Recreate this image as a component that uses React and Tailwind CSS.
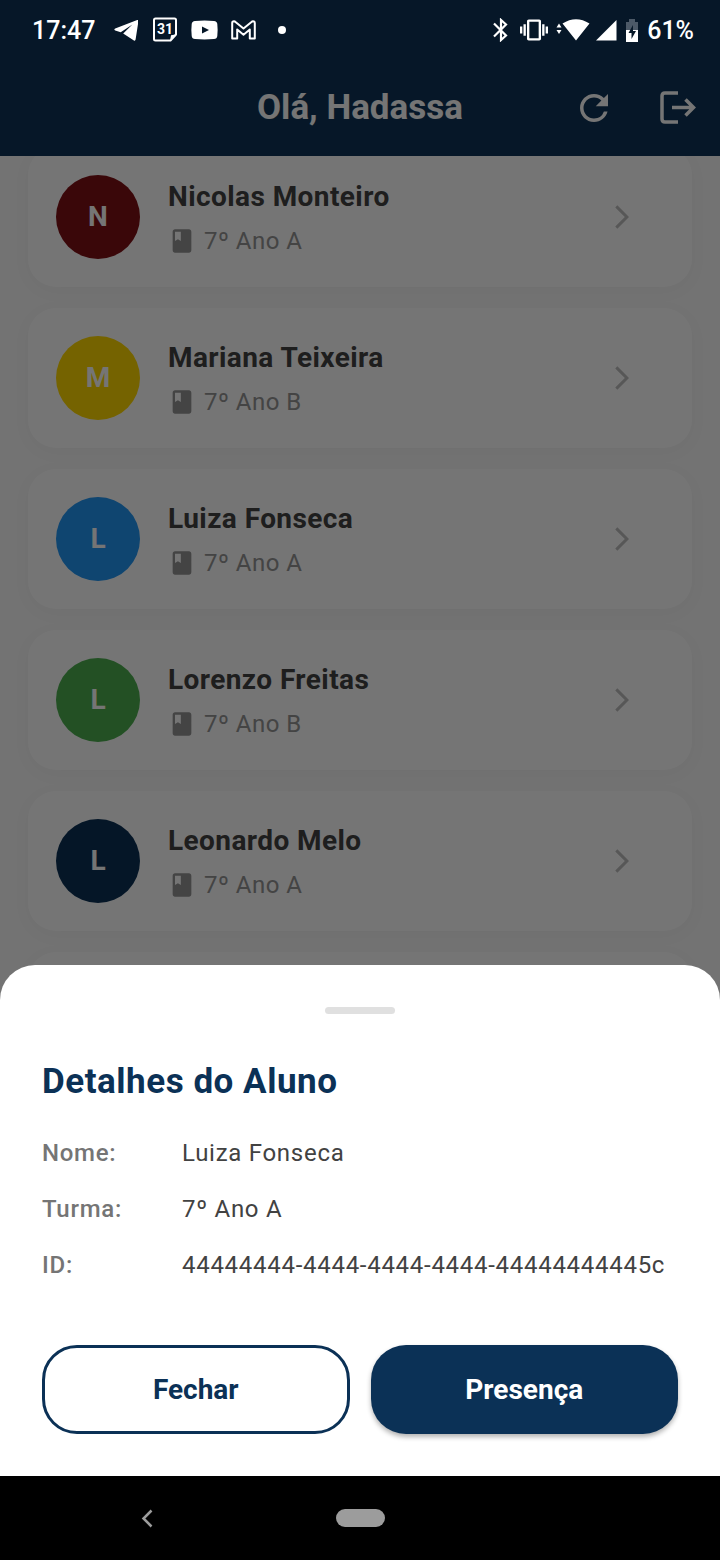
import { MdClass, MdRefresh, MdArrowForwardIos, MdVibration } from "react-icons/md";

const students = [
  { name: "Nicolas Monteiro", group: "7º Ano A", color: "bg-[#7f1015]" },
  { name: "Mariana Teixeira", group: "7º Ano B", color: "bg-[#ffd700]" },
  { name: "Luiza Fonseca", group: "7º Ano A", color: "bg-[#2196f3]" },
  { name: "Lorenzo Freitas", group: "7º Ano B", color: "bg-[#4caf50]" },
  { name: "Leonardo Melo", group: "7º Ano A", color: "bg-[#0b3156]" },
];

const details = [
  ["Nome:", "Luiza Fonseca"],
  ["Turma:", "7º Ano A"],
  ["ID:", "44444444-4444-4444-4444-44444444445c"],
];

function StatusBar() {
  return (
    <div className="relative z-10 flex h-[60px] items-center justify-between pl-8 pr-[26px] text-white">
      <div className="flex items-center">
        <span className="w-[82px] text-[25px] leading-none font-medium">17:47</span>
        <svg className="mr-[15px] h-6 w-6" viewBox="0 0 24 24" fill="currentColor" aria-hidden="true">
          <path d="M23.2 2.1 1.2 10.6c-1.2.5-1.1 1.5 0 1.8l5.5 1.8L18.4 6.6 9.2 15.4l10.7 7c.8.5 1.5.2 1.7-.8L24.4 3.4c.2-1.1-.3-1.6-1.2-1.3z" />
        </svg>
        <svg className="mr-[14px] h-[26px] w-6" viewBox="0 0 24 26" aria-hidden="true">
          <path d="M2.500 1.500h19q1.500 0 1.500 1.500v14.500L17.500 23.500h-15Q1 23.500 1 22V3q0-1.500 1.500-1.500z" fill="none" stroke="currentColor" strokeWidth="2" strokeLinejoin="round" />
          <path d="M22.500 17.500 18 18.200 17.200 23z" fill="currentColor" />
          <text x="12" y="17" textAnchor="middle" fontSize="14" fontWeight="700" fill="currentColor">31</text>
        </svg>
        <svg className="mr-[13px] h-5 w-[27px]" viewBox="0 0 27 20" aria-hidden="true">
          <path fillRule="evenodd" d="M4 .9Q13.500 0 23 .9Q26 1.200 26.300 4Q27 10 26.300 16Q26 18.800 23 19.100Q13.500 20 4 19.100Q1 18.800.7 16Q0 10 .7 4Q1 1.200 4 .9zM11 6.500v7l7-3.500z" fill="currentColor" />
        </svg>
        <svg className="mr-[22px] h-5 w-[25px]" viewBox="0 0 25 20" aria-hidden="true">
          <path d="M1.200 18.500V3Q1.200 1.200 3 1.200Q3.800 1.200 4.500 2l8 6.500 8-6.500q.7-.8 1.500-.8 1.800 0 1.800 1.800v15.500h-5V9.500l-6.300 5.200-6.300-5.200v9z" fill="none" stroke="currentColor" strokeWidth="2" strokeLinejoin="round" />
        </svg>
        <span className="h-2 w-2 rounded-full bg-white" />
      </div>
      <div className="flex items-center">
        <svg className="mr-3 h-6 w-4" viewBox="0 0 16 24" fill="none" stroke="currentColor" strokeWidth="2.200" aria-hidden="true">
          <path d="M2 5.500 14 17.500 9 22V2l5 4.500L2 18.500" />
        </svg>
        <MdVibration className="mr-2 h-7 w-7" aria-hidden="true" />
        <svg className="mr-[6px] h-[22px] w-[34px]" viewBox="0 0 34 22" fill="currentColor" aria-hidden="true">
          <path d="M.5 8.500 3 4.500 5.500 8.500zM.5 11h5L3 15zM6.500 4.500Q20 -4 33.500 4.500L20 21.500z" />
        </svg>
        <svg className="mr-[9px] h-[21px] w-[21px]" viewBox="0 0 21 21" fill="currentColor" aria-hidden="true">
          <path d="M20.500 0v20.500H0z" />
        </svg>
        <svg className="mr-[9px] h-[23px] w-3" viewBox="0 0 12 23" aria-hidden="true">
          <path d="M0 3h3V0h6v3h3v8H0z" fill="#4c5967" />
          <path d="M0 11h12v12H0z" fill="#fff" />
          <path d="M7 6 2.500 14H5.500v6L10 12H7z" fill="#071828" />
        </svg>
        <span className="text-[25px] leading-none font-medium">61%</span>
      </div>
    </div>
  );
}

function Header() {
  return (
    <header className="grid h-24 grid-cols-[1fr_auto_1fr] items-center text-white">
      <h1 className="col-start-2 text-[35px] leading-10 font-bold">Olá, Hadassa</h1>
      <div className="flex items-center justify-end gap-10 pr-[23px]">
        <button type="button" aria-label="Atualizar">
          <MdRefresh className="h-[42px] w-[42px]" />
        </button>
        <button type="button" aria-label="Sair">
          <svg className="h-[42px] w-[42px]" viewBox="0 0 42 42" fill="none" stroke="currentColor" strokeWidth="3.500">
            <path d="M23 6H10Q7 6 7 9v23q0 3 3 3h13M17 20.500h21M30.500 12.500 38.500 20.500l-8 8" />
          </svg>
        </button>
      </div>
    </header>
  );
}

const cardStyle = "flex h-[140px] w-full items-center rounded-[28px] bg-white px-7 text-left shadow-[0_4px_20px_rgba(0,0,0,0.03)]";

function StudentCard({ name, group, color }) {
  return (
    <li>
      <button type="button" className={cardStyle}>
        <span className={`flex h-[84px] w-[84px] items-center justify-center rounded-full text-[28px] font-bold text-white ${color}`}>{name[0]}</span>
        <span className="ml-7 flex flex-1 flex-col gap-2 pt-1">
          <span className="text-[28px] leading-9 font-bold tracking-[0.015em] text-[#424242]">{name}</span>
          <span className="flex items-center gap-2 text-2xl leading-9 tracking-[0.02em] text-[#949494]">
            <MdClass className="h-7 w-7" aria-hidden="true" />
            {group}
          </span>
        </span>
        <MdArrowForwardIos className="mr-7 h-7 w-7 text-[#bdbdbd]" aria-hidden="true" />
      </button>
    </li>
  );
}

function DetailsSheet() {
  return (
    <section role="dialog" aria-labelledby="sheet-title" className="absolute inset-x-0 bottom-0 rounded-t-[35px] bg-white p-[42px]">
      <div className="mx-auto h-[7px] w-[70px] rounded-full bg-[#e0e0e0]" />
      <h2 id="sheet-title" className="mt-[43px] text-[35px] leading-[50px] font-bold tracking-[0.015em] text-[#0b3156]">Detalhes do Aluno</h2>
      <dl className="mt-7 flex flex-col gap-5">
        {details.map(([label, value]) => (
          <div key={label} className="flex text-2xl leading-9 tracking-[0.03em]">
            <dt className="w-[140px] font-medium text-[#757575]">{label}</dt>
            <dd className="text-[#424242]">{value}</dd>
          </div>
        ))}
      </dl>
      <div className="mt-[62px] grid grid-cols-2 gap-[21px] text-[28px] font-bold">
        <button type="button" className="h-[89px] rounded-[35px] border-[3px] border-[#0b3156] text-[#0b3156]">Fechar</button>
        <button type="button" className="h-[89px] rounded-[35px] bg-[#0b3156] text-white shadow-[0_3px_5px_rgba(0,0,0,0.3)]">Presença</button>
      </div>
    </section>
  );
}

export default function App() {
  return (
    <div className="flex min-h-screen flex-col bg-black font-[Roboto,sans-serif]">
      <div className="relative flex flex-1 flex-col overflow-hidden bg-[#fafafa]">
        <div className="bg-[#0f3457]">
          <StatusBar />
          <Header />
        </div>
        <main className="flex-1 overflow-hidden">
          <ul className="-mt-[9px] flex flex-col gap-[21px] px-7">
            {students.map((student) => (
              <StudentCard key={student.name} {...student} />
            ))}
            <li aria-hidden="true" className={cardStyle} />
          </ul>
        </main>
        <div className="absolute inset-0 bg-black/54" />
        <DetailsSheet />
      </div>
      <nav className="grid h-[84px] grid-cols-5 items-center">
        <button type="button" aria-label="Voltar" className="col-start-2 -ml-2 text-[#9c9c9c]">
          <svg className="h-5 w-5" viewBox="0 0 20 20" fill="none" stroke="currentColor" strokeWidth="2.500">
            <path d="M15.500 2.500 7.500 10.500l8 8" />
          </svg>
        </button>
        <button type="button" aria-label="Início" className="h-[18px] w-[49px] justify-self-center rounded-full bg-[#9c9c9c]" />
      </nav>
    </div>
  );
}
